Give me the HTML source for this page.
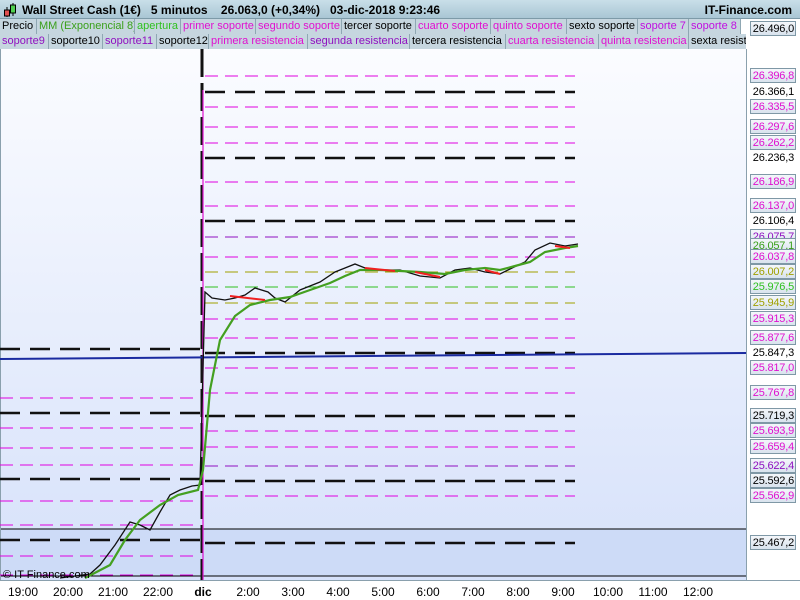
<!DOCTYPE html>
<html><head><meta charset="utf-8"><style>
*{margin:0;padding:0;box-sizing:border-box}
body{width:800px;height:600px;overflow:hidden;background:#fff;font-family:"Liberation Sans",sans-serif;position:relative}
.hdr{position:absolute;left:0;top:0;width:800px;height:19px;background:linear-gradient(#c9dfe9,#a9c6d4);border-bottom:1px solid #7d9aa8;font-size:12px;font-weight:bold;color:#000}
.row{position:absolute;left:0;width:746px;height:15px;background:#bfd3dd;font-size:11px;white-space:nowrap;overflow:hidden}
.row span{position:absolute;top:0;height:15px;line-height:14px;padding-left:2px;border-right:1px solid #8fa7b3;background:#c6d6df;overflow:hidden}
.lbl{position:absolute;left:750px;width:46px;height:15px;font-size:11px;line-height:14px;border:1px solid #7f98a6;background:linear-gradient(#f4f7fb,#d9e3ee);text-align:right;padding-right:1px;white-space:nowrap;overflow:hidden;letter-spacing:-0.2px}
.ax{position:absolute;top:585px;font-size:12px;transform:translateX(-50%)}
</style></head><body>
<div class="hdr">
<svg style="position:absolute;left:3px;top:2px" width="14" height="16"><line x1="4" y1="5" x2="4" y2="15" stroke="#000"/><rect x="1.5" y="8" width="5" height="6" fill="#e05050" stroke="#000"/><line x1="10" y1="1" x2="10" y2="14" stroke="#000"/><rect x="7.5" y="3" width="5" height="8" fill="#50d050" stroke="#000"/></svg>
<span style="position:absolute;left:22px;top:3px">Wall Street Cash (1€)&nbsp;&nbsp;&nbsp;5 minutos&nbsp;&nbsp;&nbsp;&nbsp;26.063,0 (+0,34%)&nbsp;&nbsp;&nbsp;03-dic-2018 9:23:46</span>
<span style="position:absolute;right:8px;top:3px">IT-Finance.com</span>
</div>
<div class="row" style="top:19px">
<span style="left:0;width:37px">Precio</span>
<span style="left:37px;width:98px;color:#3aa01a">MM (Exponencial 8)</span>
<span style="left:135px;width:46px;color:#30c020">apertura</span>
<span style="left:181px;width:75px;color:#e010d0">primer soporte</span>
<span style="left:256px;width:86px;color:#e010d0">segundo soporte</span>
<span style="left:342px;width:74px;color:#000">tercer soporte</span>
<span style="left:416px;width:75px;color:#e010d0">cuarto soporte</span>
<span style="left:491px;width:76px;color:#e010d0">quinto soporte</span>
<span style="left:567px;width:71px;color:#000">sexto soporte</span>
<span style="left:638px;width:51px;color:#c010e0">soporte 7</span>
<span style="left:689px;width:52px;color:#c010e0">soporte 8</span>
<span style="left:741px;width:10px;background:#fff;border:none"></span>
</div>
<div class="row" style="top:34px">
<span style="left:0;width:49px;color:#9010c0">soporte9</span>
<span style="left:49px;width:54px;color:#000">soporte10</span>
<span style="left:103px;width:54px;color:#9010c0">soporte11</span>
<span style="left:157px;width:52px;color:#000">soporte12</span>
<span style="left:209px;width:99px;color:#e010d0">primera resistencia</span>
<span style="left:308px;width:102px;color:#9010c0">segunda resistencia</span>
<span style="left:410px;width:96px;color:#000">tercera resistencia</span>
<span style="left:506px;width:93px;color:#e010d0">cuarta resistencia</span>
<span style="left:599px;width:90px;color:#e010d0">quinta resistencia</span>
<span style="left:689px;width:60px;color:#000">sexta resistencia</span>
</div>
<svg style="position:absolute;left:0;top:49px" width="800" height="551" viewBox="0 49 800 551">
<defs><linearGradient id="bg" x1="0" y1="0" x2="0" y2="1"><stop offset="0" stop-color="#fbfcff"/><stop offset="1" stop-color="#d6e1fa"/></linearGradient></defs>
<rect x="0" y="49" width="746" height="531" fill="url(#bg)"/>
<rect x="0" y="529" width="746" height="47" fill="#cddbf7"/>
<line x1="0" y1="529" x2="746" y2="529" stroke="#000"/>
<line x1="0" y1="576" x2="746" y2="576" stroke="#000"/>
<line x1="0.5" y1="49" x2="0.5" y2="580" stroke="#8aa0ad"/>
<line x1="746.5" y1="49" x2="746.5" y2="580" stroke="#8aa0ad"/>
<line x1="0" y1="580.5" x2="800" y2="580.5" stroke="#8aa0ad"/>
<g fill="none">
<g stroke="#e000e0" stroke-width="1" stroke-dasharray="13 7">
<path d="M205 76H575M205 107H575M205 127H575M205 143H575M205 182H575M205 206H575M205 257H575M205 319H575M205 338H575M205 368H575M205 393H575M205 431H575M205 447H575M205 496H575"/>
<path d="M0 398H200M0 428H200M0 448H200M0 465H200M0 501H200M0 525H200M0 556H200M0 575H200"/>
</g>
<g stroke="#9010c0" stroke-width="1" stroke-dasharray="13 7"><path d="M205 237H575M205 466H575"/></g>
<g stroke="#a0a000" stroke-width="1" stroke-dasharray="13 7"><path d="M205 272H575M205 303H575"/></g>
<g stroke="#30c020" stroke-width="1" stroke-dasharray="13 7"><path d="M205 287H575"/></g>
<g stroke="#111" stroke-width="2.5" stroke-dasharray="20 10"><path d="M205 92H575M205 158H575M205 221H575M205 353H575M205 416H575M205 481H575M205 543H575"/>
<path d="M0 349H200M0 413H200M0 479H200M0 540H200"/></g>
<line x1="202" y1="49" x2="202" y2="580" stroke="#111" stroke-width="3" stroke-dasharray="28 6"/>
<line x1="203" y1="90" x2="203" y2="580" stroke="#e010d0" stroke-width="1.2"/>
<line x1="0" y1="359" x2="746" y2="353" stroke="#1a2aa0" stroke-width="2"/>
<path d="M60 578L90 574 100 565 115 545 130 522 140 525 150 530 160 512 170 495 180 490 192 486 200 485 205 292 212 298 225 300 235 298 245 295 255 288 268 292 275 298 285 302 300 290 320 282 335 272 345 268 355 264 365 268 380 270 400 270 420 276 440 278 455 270 470 268 485 272 500 274 512 268 525 262 535 250 550 243 565 246 578 244" stroke="#111" stroke-width="1.3"/>
<path d="M85 578L110 565 125 540 140 520 160 505 178 495 198 490 203 470 210 390 220 340 235 316 250 305 270 300 290 297 310 290 330 283 345 276 360 270 380 270 400 271 420 272 445 274 465 270 485 268 500 270 515 266 530 262 545 252 565 248 578 246" stroke="#44a020" stroke-width="2.2"/>
<path d="M365 268L395 271M415 272L440 277M485 270L500 274M230 296L265 300M555 246L570 248" stroke="#f02020" stroke-width="2"/>
</g>
<text x="3" y="578" font-size="11" fill="#000" font-family="Liberation Sans">© IT Finance.com</text>
</svg>
<div class="lbl" style="top:21px;color:#000">26.496,0</div>
<div class="lbl" style="top:68px;color:#e010d0">26.396,8</div>
<div class="lbl" style="top:84px;color:#000;background:none;border-color:transparent">26.366,1</div>
<div class="lbl" style="top:99px;color:#e010d0">26.335,5</div>
<div class="lbl" style="top:119px;color:#e010d0">26.297,6</div>
<div class="lbl" style="top:135px;color:#e010d0">26.262,2</div>
<div class="lbl" style="top:150px;color:#000;background:none;border-color:transparent">26.236,3</div>
<div class="lbl" style="top:174px;color:#e010d0">26.186,9</div>
<div class="lbl" style="top:198px;color:#e010d0">26.137,0</div>
<div class="lbl" style="top:213px;color:#000;background:none;border-color:transparent">26.106,4</div>
<div class="lbl" style="top:229px;color:#9010c0">26.075,7</div>
<div class="lbl" style="top:238px;color:#3aa01a">26.057,1</div>
<div class="lbl" style="top:249px;color:#e010d0">26.037,8</div>
<div class="lbl" style="top:264px;color:#a0a000">26.007,2</div>
<div class="lbl" style="top:279px;color:#30c020">25.976,5</div>
<div class="lbl" style="top:295px;color:#a0a000">25.945,9</div>
<div class="lbl" style="top:311px;color:#e010d0">25.915,3</div>
<div class="lbl" style="top:330px;color:#e010d0">25.877,6</div>
<div class="lbl" style="top:345px;color:#000;background:none;border-color:transparent">25.847,3</div>
<div class="lbl" style="top:360px;color:#e010d0">25.817,0</div>
<div class="lbl" style="top:385px;color:#e010d0">25.767,8</div>
<div class="lbl" style="top:408px;color:#000">25.719,3</div>
<div class="lbl" style="top:423px;color:#e010d0">25.693,9</div>
<div class="lbl" style="top:439px;color:#e010d0">25.659,4</div>
<div class="lbl" style="top:458px;color:#9010c0">25.622,4</div>
<div class="lbl" style="top:473px;color:#000">25.592,6</div>
<div class="lbl" style="top:488px;color:#e010d0">25.562,9</div>
<div class="lbl" style="top:535px;color:#000">25.467,2</div>
<div class="ax" style="left:23px">19:00</div><div class="ax" style="left:68px">20:00</div><div class="ax" style="left:113px">21:00</div><div class="ax" style="left:158px">22:00</div><div class="ax" style="left:203px;font-weight:bold">dic</div><div class="ax" style="left:248px">2:00</div><div class="ax" style="left:293px">3:00</div><div class="ax" style="left:338px">4:00</div><div class="ax" style="left:383px">5:00</div><div class="ax" style="left:428px">6:00</div><div class="ax" style="left:473px">7:00</div><div class="ax" style="left:518px">8:00</div><div class="ax" style="left:563px">9:00</div><div class="ax" style="left:608px">10:00</div><div class="ax" style="left:653px">11:00</div><div class="ax" style="left:698px">12:00</div>
</body></html>
